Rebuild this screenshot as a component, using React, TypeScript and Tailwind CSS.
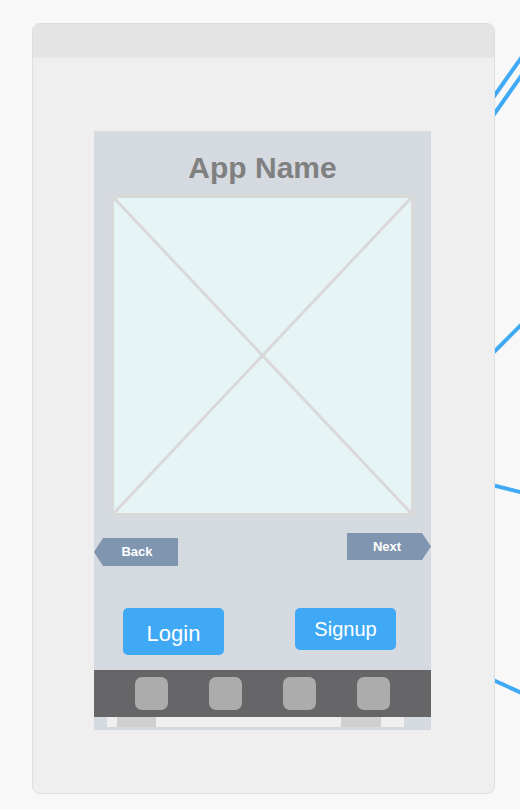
import React from 'react';

function Placeholder() {
  return (
    <div className="relative ml-[17px] mt-[12px] h-[321px] w-[303px] border-[3px] border-[#d9d9d9] bg-[#e6f4f5]">
      <svg className="absolute inset-0 h-full w-full" viewBox="0 0 297 315" preserveAspectRatio="none">
        <line x1="0" y1="0" x2="297" y2="315" stroke="#d9d9d9" strokeWidth="3" />
        <line x1="297" y1="0" x2="0" y2="315" stroke="#d9d9d9" strokeWidth="3" />
      </svg>
    </div>
  );
}

function Connectors() {
  return (
    <svg className="absolute inset-0 h-full w-full" viewBox="0 0 520 809">
      <g stroke="#3fa9f5" strokeWidth="4" fill="none">
        <line x1="480" y1="116" x2="524" y2="54" />
        <line x1="480" y1="134" x2="524" y2="72" />
        <line x1="480" y1="366" x2="524" y2="322" />
        <line x1="480" y1="482" x2="524" y2="493" />
        <line x1="480" y1="674" x2="524" y2="694" />
      </g>
    </svg>
  );
}

export default function App() {
  const tabs = [0, 1, 2, 3];

  return (
    <div className="relative h-[809px] w-[520px] overflow-hidden bg-[#f8f8f8] pl-[32px] pt-[23px] font-['Liberation_Sans',Arial,sans-serif]">
      <Connectors />
      <div className="relative flex h-[771px] w-[463px] flex-col overflow-hidden rounded-lg border border-[#dedede] bg-[#efefef]">
        <div className="h-[34px] shrink-0 border-b border-[#e9e9e9] bg-[#e4e4e4]" />

        <div className="ml-[61px] mt-[73px] flex h-[599px] w-[337px] flex-col bg-[#d5d9e0]">
          <h1 className="mt-[22px] h-[30px] text-center text-[30px] font-bold leading-[30px] text-[#808080]">
            App Name
          </h1>

          <Placeholder />

          <div className="relative h-[60px]">
            <div className="absolute left-0 top-[22px] flex h-[28px] w-[84px] items-center justify-center bg-[#7f95b0] pl-[2px] text-[13px] font-bold text-white [clip-path:polygon(0_50%,9px_0,100%_0,100%_100%,9px_100%)]">
              Back
            </div>
            <div className="absolute right-0 top-[17px] flex h-[27px] w-[84px] items-center justify-center bg-[#7f95b0] pr-[4px] text-[13px] font-bold text-white [clip-path:polygon(0_0,calc(100%-9px)_0,100%_50%,calc(100%-9px)_100%,0_100%)]">
              Next
            </div>
          </div>

          <div className="mt-[32px] flex h-[62px] items-start justify-between pl-[29px] pr-[35px]">
            <button className="flex h-[47px] w-[101px] items-center justify-center rounded-[5px] bg-[#3fa9f5] pt-[4px] text-[22px] text-white">
              Login
            </button>
            <button className="flex h-[42px] w-[101px] items-center justify-center rounded-[5px] bg-[#3fa9f5] text-[20px] text-white">
              Signup
            </button>
          </div>

          <div className="flex h-[47px] items-center gap-[41px] bg-[#666668] pl-[41px]">
            {tabs.map((t) => (
              <div key={t} className="h-[33px] w-[33px] rounded-[7px] bg-[#acacac]" />
            ))}
          </div>

          <div className="flex h-[10px]">
            <div className="ml-[13px] flex w-[297px] bg-[#f0f0f0]">
              <div className="ml-[10px] w-[39px] bg-[#d0d0d0]" />
              <div className="ml-[185px] w-[40px] bg-[#d0d0d0]" />
            </div>
          </div>
          <div className="h-[2px] bg-[#d5d9e0]" />
        </div>
      </div>
    </div>
  );
}
